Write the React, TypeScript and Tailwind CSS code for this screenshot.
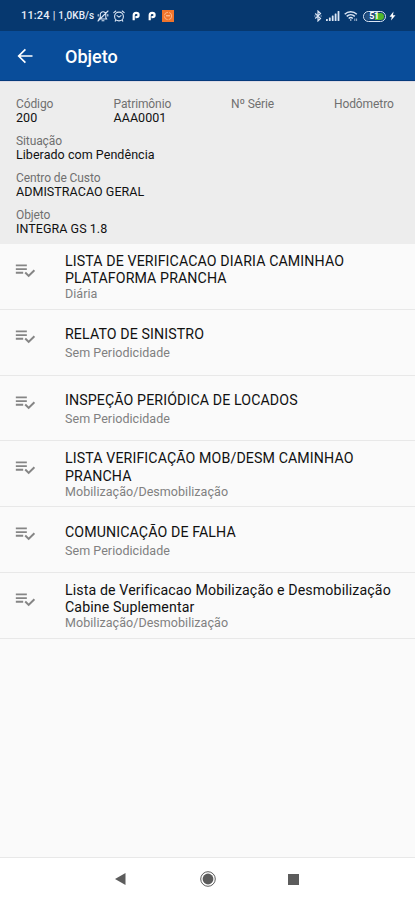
import clsx from "clsx";

type Checklist = {
  title: string[];
  period: string;
};

const checklists: Checklist[] = [
  {
    title: ["LISTA DE VERIFICACAO DIARIA CAMINHAO", "PLATAFORMA PRANCHA"],
    period: "Diária",
  },
  { title: ["RELATO DE SINISTRO"], period: "Sem Periodicidade" },
  { title: ["INSPEÇÃO PERIÓDICA DE LOCADOS"], period: "Sem Periodicidade" },
  {
    title: ["LISTA VERIFICAÇÃO MOB/DESM CAMINHAO", "PRANCHA"],
    period: "Mobilização/Desmobilização",
  },
  { title: ["COMUNICAÇÃO DE FALHA"], period: "Sem Periodicidade" },
  {
    title: [
      "Lista de Verificacao Mobilização e Desmobilização",
      "Cabine Suplementar",
    ],
    period: "Mobilização/Desmobilização",
  },
];

function ChecklistIcon() {
  return (
    <svg viewBox="0 0 24 24" className="size-[22px] fill-[#858585]">
      <path d="M14 10H2v2h12v-2zm0-4H2v2h12V6zM2 16h8v-2H2v2zm19.5-4.5L23 13l-6.99 7-4.51-4.5L13 14l3.01 3 5.49-5.5z" />
    </svg>
  );
}

function BellOffIcon() {
  return (
    <svg
      viewBox="0 0 12 12"
      className="size-3 fill-none stroke-[#dbe6f5] stroke-[1.1]"
      strokeLinecap="round"
    >
      <path d="M2 9h7.6L8.8 7.5V4.6C8.8 2.9 7.7 1.8 6.1 1.8S3.3 2.9 3.3 4.6v2.7L2 9zM5 10.7h2M1 11 11 1M10.8 4.5V6M1.2 4.5V6" />
    </svg>
  );
}

function AlarmIcon() {
  return (
    <svg
      viewBox="0 0 12 12"
      className="size-3 fill-none stroke-[#dbe6f5] stroke-[1.1]"
      strokeLinecap="round"
    >
      <circle cx="6" cy="6.5" r="4.4" />
      <path d="M.8 2.7 2.8 1M11.2 2.7 9.2 1M4 5.6l2 1.5 2-1.5M2.9 10.2l-.7.9M9.1 10.2l.7.9" />
    </svg>
  );
}

function ParkingIcon() {
  return (
    <svg viewBox="0 0 8 10" className="h-[10px] w-2 fill-none stroke-white">
      <path
        d="M1.700 9.300V4.300C1.700 2.700 2.700 1.800 4.200 1.800s2.400.9 2.400 2.200-.9 2.200-2.300 2.200H3.400"
        strokeWidth="2.200"
      />
    </svg>
  );
}

function BluetoothIcon() {
  return (
    <svg
      viewBox="0 0 8 12"
      className="h-3 w-2 fill-none stroke-[#dbe6f5] stroke-[1.2]"
    >
      <path d="M1.2 3.500 6.500 8.400 4 10.900V1.100l2.500 2.500L1.200 8.500" />
      <path d="M.4 6h1M6.600 6h1" />
    </svg>
  );
}

function SignalIcon() {
  return (
    <svg viewBox="0 0 14 10" className="h-[10px] w-[14px] fill-[#dbe6f5]">
      <rect x="0" y="8" width="1.8" height="2" rx=".5" />
      <rect x="2.9" y="6.5" width="1.8" height="3.5" rx=".5" />
      <rect x="5.8" y="4.5" width="1.8" height="5.5" rx=".5" />
      <rect x="8.7" y="2.5" width="1.8" height="7.5" rx=".5" />
      <rect x="11.6" y="0" width="1.8" height="10" rx=".5" />
    </svg>
  );
}

function WifiIcon() {
  return (
    <svg
      viewBox="0 0 14 12"
      className="h-3 w-[14px] fill-none stroke-[#dbe6f5] stroke-[1.5]"
    >
      <path d="M.7 4.200c3.500-3.300 8.600-3.300 12.100 0M2.700 6.400c2.300-2.200 5.800-2.200 8.100 0M4.700 8.500c1.200-1.100 2.900-1.100 4.100 0" />
      <circle cx="6.75" cy="10" r=".8" className="fill-[#dbe6f5] stroke-none" />
      <path d="M10.8 8.500v2.500M12.600 8.500v2.500" strokeWidth=".7" />
    </svg>
  );
}

function StatusBar() {
  return (
    <div className="flex h-[31px] items-center bg-[#06386f] pt-px pl-[21px] text-[#e6eef9]">
      <span className="w-[76px] text-[11px] font-medium whitespace-nowrap">
        <span className="tracking-[0.15px]">11:24</span>
        <span className="px-[3px] font-normal">|</span>
        <span className="text-[10px] tracking-[0.1px]">1,0KB/s</span>
      </span>
      <div className="flex items-center">
        <BellOffIcon />
        <span className="ml-[4px] flex">
          <AlarmIcon />
        </span>
        <span className="ml-[7px] flex">
          <ParkingIcon />
        </span>
        <span className="ml-2 flex">
          <ParkingIcon />
        </span>
        <svg viewBox="0 0 12 12" className="ml-[6px] size-3">
          <path d="M0 0h12v12H0z" fill="#ef742c" />
          <circle
            cx="6"
            cy="6"
            r="3.7"
            fill="none"
            stroke="#ffc296"
            strokeWidth=".8"
            strokeDasharray="5 1"
          />
          <path d="M4 5.8h4" stroke="#ffd5b5" />
        </svg>
      </div>
      <div className="mr-[19px] ml-auto flex items-center">
        <BluetoothIcon />
        <span className="ml-[4px] flex">
          <SignalIcon />
        </span>
        <span className="ml-[4px] flex">
          <WifiIcon />
        </span>
        <div className="ml-[5px] flex h-[11px] w-[23px] rounded-full border border-[#dbe6f5] p-px">
          <div className="flex w-full items-center justify-center rounded-full bg-linear-to-r from-[#234f80] from-50% to-[#4fb62c] to-50% pr-px text-[9px] leading-none font-bold tracking-[-0.4px] text-white">
            51
          </div>
        </div>
        <svg viewBox="0 0 7 10" className="ml-[3px] h-[10px] w-[7px] fill-white">
          <path d="M4.5.5.5 5.8h2.3L2 9.5l4.5-5.3H4z" />
        </svg>
      </div>
    </div>
  );
}

function AppBar() {
  return (
    <header className="flex h-[50px] items-center border-b border-[#063b7c] bg-[#094d9a] pt-px text-white">
      <svg
        viewBox="0 0 16 16"
        className="ml-[17px] size-4 fill-none stroke-white stroke-[1.7]"
      >
        <path d="M15.5 8H2M8.4 1.3 1.7 8l6.7 6.7" />
      </svg>
      <h1 className="ml-8 text-[18px] font-medium">Objeto</h1>
    </header>
  );
}

function Field({
  label,
  value,
  className,
}: {
  label: string;
  value?: string;
  className?: string;
}) {
  return (
    <div className={clsx("whitespace-nowrap", className)}>
      <div className="text-[12px] leading-[14px] tracking-[-0.1px] text-[#707070]">
        {label}
      </div>
      <div className="h-[14px] text-[12.5px] leading-[14px] tracking-[0.05px] text-[#111111]">
        {value}
      </div>
    </div>
  );
}

function AssetDetails() {
  return (
    <section className="h-[163px] border-t border-[#dedce6] bg-[#ededed] px-4 pt-[15px]">
      <div className="flex">
        <Field label="Código" value="200" className="w-[97.5px]" />
        <Field label="Patrimônio" value="AAA0001" className="w-[117.5px]" />
        <Field label="Nº Série" className="w-[103px]" />
        <Field label="Hodômetro" />
      </div>
      <Field className="mt-[9px]" label="Situação" value="Liberado com Pendência" />
      <Field className="mt-[9px]" label="Centro de Custo" value="ADMISTRACAO GERAL" />
      <Field className="mt-[9px]" label="Objeto" value="INTEGRA GS 1.8" />
    </section>
  );
}

function ChecklistRow({ title, period }: Checklist) {
  const single = title.length === 1;
  return (
    <li className="flex h-[65.8px] border-b border-[#e8e8e8]">
      <div className="w-[65px] pt-[15px] pl-[14px]">
        <ChecklistIcon />
      </div>
      <div className={single ? "pt-[16.5px]" : "pt-[9px]"}>
        {title.map((line) => (
          <div
            key={line}
            className="text-[14.2px] leading-[17.4px] tracking-[0.11px] whitespace-nowrap text-[#111111]"
          >
            {line}
          </div>
        ))}
        <div
          className={clsx(
            "text-[12.5px] leading-[15px] tracking-[0.05px] text-[#808080]",
            single ? "mt-[1.5px]" : "-mt-[1.5px]"
          )}
        >
          {period}
        </div>
      </div>
    </li>
  );
}

function NavigationBar() {
  return (
    <nav className="flex h-[43px] items-center border-t border-[#e8e8e8] bg-white fill-[#5c5c5c]">
      <svg viewBox="0 0 11 12" className="ml-[115px] h-3 w-[11px]">
        <path d="M10.5 0v12L0 6z" />
      </svg>
      <svg viewBox="0 0 16 16" className="ml-[73.5px] size-4">
        <circle cx="8" cy="8" r="7.3" fill="none" stroke="#5c5c5c" />
        <circle cx="8" cy="8" r="5.4" />
      </svg>
      <svg viewBox="0 0 11 11" className="ml-[72.5px] size-[11px]">
        <path d="M0 0h11v11H0z" />
      </svg>
    </nav>
  );
}

export default function App() {
  return (
    <div className="flex h-[900px] w-[415px] flex-col overflow-hidden bg-[#fafafa] font-['Roboto',sans-serif]">
      <StatusBar />
      <AppBar />
      <AssetDetails />
      <ul className="flex-1">
        {checklists.map((item) => (
          <ChecklistRow key={item.title[0]} {...item} />
        ))}
      </ul>
      <NavigationBar />
    </div>
  );
}
